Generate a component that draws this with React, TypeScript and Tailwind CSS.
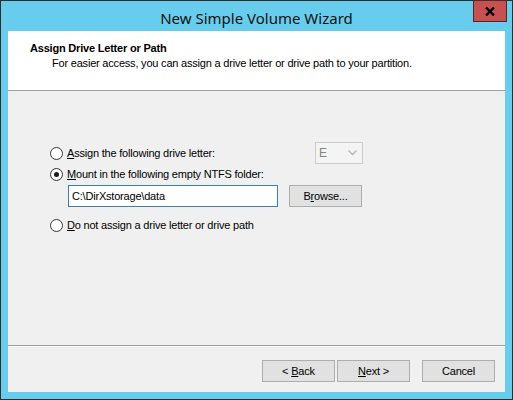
import React, { useState } from "react";

const font = "font-['Liberation_Sans',Arial,sans-serif] tracking-[-0.2px]";

const Radio = ({ checked, onClick }: { checked: boolean; onClick: () => void }) => (
  <span
    onClick={onClick}
    className="w-[13px] h-[13px] rounded-full border border-[#333333] bg-white flex items-center justify-center shrink-0"
  >
    {checked && <span className="w-[5px] h-[5px] rounded-full bg-[#1a1a1a]" />}
  </span>
);

const Btn = ({ children, className = "" }: { children: React.ReactNode; className?: string }) => (
  <button
    className={`h-[22px] w-[73px] border border-[#adadad] bg-[#e1e1e1] text-[11px] text-black flex items-center justify-center ${className}`}
  >
    <span>{children}</span>
  </button>
);

export default function App() {
  const [choice, setChoice] = useState(1);
  const [path, setPath] = useState("C:\\DirXstorage\\data");

  return (
    <div className={`w-[513px] h-[400px] bg-[#68cdec] border border-[#2e2e2e] flex flex-col ${font}`}>
      {/* title bar */}
      <div className="relative h-[30px] shrink-0 flex items-center justify-center">
        <span className="text-[15px] tracking-normal text-[#111] font-['Noto_Sans',sans-serif] mt-[4px]">
          New Simple Volume Wizard
        </span>
        <div className="absolute right-[5px] top-[-1px] w-[34px] h-[22px] bg-[#c75050] border border-[#4a2a2a] flex items-center justify-center">
          <svg width="10" height="9" viewBox="0 0 10 9">
            <path d="M1 0.5 L9 8.5 M9 0.5 L1 8.5" stroke="#000" strokeWidth="2.4" />
          </svg>
        </div>
      </div>

      {/* client area */}
      <div className="flex-1 mx-[7px] mb-[7px] bg-[#f0f0f0] flex flex-col">
        <div className="h-[59px] bg-white shrink-0 pl-[22px] pt-[11px]">
          <div className="text-[11px] font-bold text-black leading-[13px]">Assign Drive Letter or Path</div>
          <div className="text-[11px] text-black leading-[13px] pl-[22px] mt-[2px]">
            For easier access, you can assign a drive letter or drive path to your partition.
          </div>
        </div>
        <div className="h-px bg-[#a0a0a0] shrink-0" />

        <div className="flex-1 pl-[42px] pt-[51px] text-[11px] text-black">
          <div className="flex items-center h-[22px]">
            <Radio checked={choice === 0} onClick={() => setChoice(0)} />
            <span className="ml-[4px] w-[248px]">
              <u>A</u>ssign the following drive letter:
            </span>
            <div className="w-[48px] h-[22px] border border-[#cccccc] bg-[#f4f4f4] flex items-center justify-between pl-[3px] pr-[5px] text-[#838383] text-[12px]">
              <span>E</span>
              <svg width="9" height="6" viewBox="0 0 9 6">
                <path d="M0.5 0.5 L4.5 4.5 L8.5 0.5" fill="none" stroke="#b5b5b5" strokeWidth="1.3" />
              </svg>
            </div>
          </div>

          <div className="flex items-center h-[13px] mt-[4px]">
            <Radio checked={choice === 1} onClick={() => setChoice(1)} />
            <span className="ml-[4px]">
              <u>M</u>ount in the following empty NTFS folder:
            </span>
          </div>
          <div className="flex items-center mt-[4px] ml-[18px]">
            <input
              value={path}
              onChange={(e) => setPath(e.target.value)}
              className="w-[210px] h-[22px] border border-[#3c7fb1] bg-white px-[3px] text-[11px] tracking-[-0.2px] outline-none"
            />
            <Btn className="ml-[11px] h-[21px] w-[72px]">
              B<u>r</u>owse...
            </Btn>
          </div>

          <div className="flex items-center h-[13px] mt-[12px]">
            <Radio checked={choice === 2} onClick={() => setChoice(2)} />
            <span className="ml-[4px]">
              <u>D</u>o not assign a drive letter or drive path
            </span>
          </div>
        </div>

        <div className="h-px bg-[#a0a0a0] shrink-0" />
        <div className="h-px bg-white shrink-0" />
        <div className="h-[45px] shrink-0 flex items-start justify-end pt-[13px] pr-[10px]">
          <Btn>
            &lt; <u>B</u>ack
          </Btn>
          <Btn className="ml-[2px]">
            <u>N</u>ext &gt;
          </Btn>
          <Btn className="ml-[12px]">Cancel</Btn>
        </div>
      </div>
    </div>
  );
}
